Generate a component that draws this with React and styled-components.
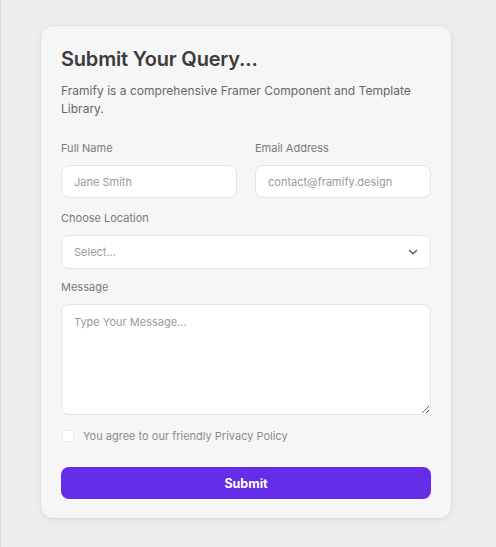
import React from "react";
import styled, { createGlobalStyle } from "styled-components";

const Global = createGlobalStyle`
  html, body { margin: 0; padding: 0; background: #ededed; }
  body { font-family: Inter, "Noto Sans", sans-serif; -webkit-font-smoothing: antialiased; }
  * { box-sizing: border-box; }
`;

const Page = styled.div`
  min-height: 547px;
  padding: 26px 44px 29px 40px;
  border-left: 1px solid #dcdcdc;
`;

const Card = styled.form`
  width: 410px;
  background: #f6f6f6;
  border-radius: 12px;
  box-shadow: 0 0 0 1px rgba(0,0,0,0.03), 0 2px 6px rgba(0,0,0,0.06);
  padding: 20px 20px 19px 20px;
  display: flex;
  flex-direction: column;
`;

const Title = styled.h1`
  margin: 0;
  font-size: 20px;
  font-weight: 600;
  color: #3b3b3b;
  letter-spacing: -0.2px;
  line-height: 26px;
`;

const Subtitle = styled.p`
  margin: 10px 0 0;
  font-size: 12px;
  letter-spacing: 0.02px;
  line-height: 18px;
  color: #676767;
`;

const Row = styled.div`
  display: grid;
  grid-template-columns: minmax(0, 1fr) minmax(0, 1fr);
  gap: 18px;
  margin-top: 23px;
`;

const Field = styled.label`
  display: flex;
  flex-direction: column;
  gap: 10px;
  min-width: 0;
  margin-top: ${(p) => p.$mt || 0}px;
`;

const Label = styled.span`
  font-size: 11px;
  color: #7a7a7a;
  line-height: 14px;
`;

const Input = styled.input`
  width: 100%;
  min-width: 0;
  height: 33px;
  border: 1px solid #e4e4e4;
  border-radius: 8px;
  background: #fff;
  padding: 0 12px;
  font-family: inherit;
  font-size: 11px;
  color: #333;
  outline: none;
  &::placeholder { color: #9a9a9a; }
`;

const SelectBox = styled.div`
  height: 34px;
  border: 1px solid #e4e4e4;
  border-radius: 8px;
  background: #fff;
  padding: 0 12px;
  display: flex;
  align-items: center;
  justify-content: space-between;
  font-size: 11px;
  color: #9a9a9a;
`;

const TextArea = styled.textarea`
  height: 111px;
  border: 1px solid #e4e4e4;
  border-radius: 8px;
  background: #fff;
  padding: 10px 12px;
  font-family: inherit;
  font-size: 11px;
  color: #333;
  outline: none;
  resize: vertical;
  &::placeholder { color: #9a9a9a; }
`;

const CheckRow = styled.label`
  display: flex;
  align-items: center;
  gap: 9px;
  margin-top: 14px;
  font-size: 11px;
  line-height: 14px;
  color: #8c8c8c;
`;

const Box = styled.span`
  width: 12px;
  height: 12px;
  border-radius: 3px;
  background: #fff;
  border: 1px solid #ececec;
  margin-left: 1px;
`;

const Button = styled.button`
  margin-top: 24px;
  height: 32px;
  border: none;
  border-radius: 8px;
  background: #652ce9;
  color: #fff;
  font-family: inherit;
  font-weight: 700;
  font-size: 12.5px;
  cursor: pointer;
`;

export default function App() {
  return (
    <>
      <Global />
      <Page>
        <Card onSubmit={(e) => e.preventDefault()}>
          <Title>Submit Your Query...</Title>
          <Subtitle>
            Framify is a comprehensive Framer Component and Template Library.
          </Subtitle>
          <Row>
            <Field>
              <Label>Full Name</Label>
              <Input placeholder="Jane Smith" />
            </Field>
            <Field>
              <Label>Email Address</Label>
              <Input placeholder="contact@framify.design" />
            </Field>
          </Row>
          <Field $mt={13}>
            <Label>Choose Location</Label>
            <SelectBox>
              <span>Select...</span>
              <svg width="10" height="10" viewBox="0 0 10 10" fill="none">
                <path d="M1.5 3.5 L5 6.8 L8.5 3.5" stroke="#555" strokeWidth="1.4" strokeLinecap="round" strokeLinejoin="round" />
              </svg>
            </SelectBox>
          </Field>
          <Field $mt={11}>
            <Label>Message</Label>
            <TextArea placeholder="Type Your Message..." />
          </Field>
          <CheckRow>
            <Box />
            You agree to our friendly Privacy Policy
          </CheckRow>
          <Button type="submit">Submit</Button>
        </Card>
      </Page>
    </>
  );
}
